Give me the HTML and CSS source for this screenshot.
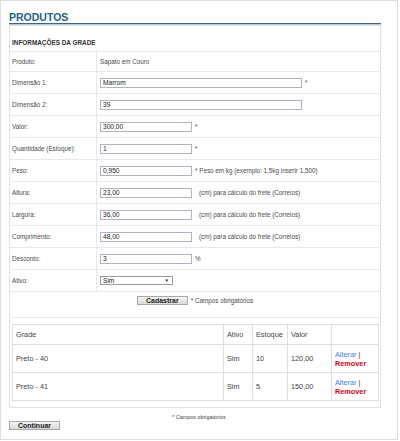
FILE: index.html
```html
<!DOCTYPE html>
<html lang="pt-BR">
<head>
<meta charset="utf-8">
<title>Produtos</title>
<link rel="stylesheet" href="styles.css">
</head>
<body>
<div class="page">
  <h1 class="title">PRODUTOS</h1>
  <div class="box">
    <div class="head">INFORMAÇÕES DA GRADE</div>
    <div class="row short-row"><div class="lbl">Produto:</div><div class="val">Sapato em Couro</div></div>
    <div class="row"><div class="lbl">Dimensão 1:</div><div class="val"><input class="inp long" value="Marrom"><span class="req">*</span></div></div>
    <div class="row"><div class="lbl">Dimensão 2:</div><div class="val"><input class="inp long" value="39"></div></div>
    <div class="row"><div class="lbl">Valor:</div><div class="val"><input class="inp" value="300,00"><span class="req">*</span></div></div>
    <div class="row"><div class="lbl">Quantidade (Estoque):</div><div class="val"><input class="inp" value="1"><span class="req">*</span></div></div>
    <div class="row"><div class="lbl">Peso:</div><div class="val"><input class="inp" value="0,950"><span class="req">* Peso em kg (exemplo: 1,5kg inserir 1,500)</span></div></div>
    <div class="row"><div class="lbl">Altura:</div><div class="val"><input class="inp" value="23,00"><span class="hint">(cm) para cálculo do frete (Correios)</span></div></div>
    <div class="row"><div class="lbl">Largura:</div><div class="val"><input class="inp" value="36,00"><span class="hint">(cm) para cálculo do frete (Correios)</span></div></div>
    <div class="row"><div class="lbl">Comprimento:</div><div class="val"><input class="inp" value="48,00"><span class="hint">(cm) para cálculo do frete (Correios)</span></div></div>
    <div class="row"><div class="lbl">Desconto:</div><div class="val"><input class="inp" value="3"><span class="req">%</span></div></div>
    <div class="row"><div class="lbl">Ativo:</div><div class="val"><div class="select"><span>Sim</span><span class="arrow">▼</span></div></div></div>
    <div class="submit-row"><button class="btn">Cadastrar</button><span class="req-note">* Campos obrigatórios</span></div>
    <div class="grid-wrap">
      <table class="grid">
        <colgroup><col class="c1"><col class="c2"><col class="c3"><col class="c4"><col class="c5"></colgroup>
        <tr class="gh"><td>Grade</td><td>Ativo</td><td>Estoque</td><td>Valor</td><td></td></tr>
        <tr class="gr"><td>Preto - 40</td><td>Sim</td><td>10</td><td>120,00</td><td><a class="alt">Alterar</a> | <br><a class="rem">Remover</a></td></tr>
        <tr class="gr"><td>Preto - 41</td><td>Sim</td><td>5</td><td>150,00</td><td><a class="alt">Alterar</a> | <br><a class="rem">Remover</a></td></tr>
      </table>
    </div>
  </div>
  <p class="note">* Campos obrigatórios</p>
  <button class="btn continue">Continuar</button>
</div>
</body>
</html>
```
FILE: styles.css
```css
* { box-sizing: border-box; }
html, body { margin: 0; background: #fff; }
body { font-family: "Liberation Sans", Arial, sans-serif; color: #4a4a4a; }

.page {
  width: 398px;
  height: 440px;
  border: 1px solid #dedede;
  padding: 0 8px 0 8px;
}

.title {
  margin: 10px 0 0;
  width: 372px;
  font-size: 10.5px;
  line-height: 12px;
  font-weight: bold;
  color: #246089;
  border-bottom: 1px solid #3e6583;
  box-shadow: 0 1px 0 #acc9dd;
}

.box {
  width: 372px;
  margin-top: 1px;
  border: 1px solid #e2e2e2;
}

.head {
  height: 26px;
  padding: 13px 0 0 2px;
  font-size: 6.4px;
  line-height: 7px;
  font-weight: bold;
  color: #333;
  border-bottom: 1px solid #e8e8e8;
}

.row {
  display: flex;
  height: 22px;
  border-bottom: 1px solid #e8e8e8;
  font-size: 6.3px;
}
.row.short-row { height: 20px; }

.lbl {
  width: 87px;
  padding-left: 2px;
  display: flex;
  align-items: center;
  border-right: 1px solid #e8e8e8;
}

.val {
  flex: 1;
  padding-left: 3px;
  display: flex;
  align-items: center;
}

.inp {
  width: 92px;
  height: 10px;
  margin: 0;
  padding: 0 2px;
  border: 1px solid #aeb0cc;
  font-family: "Liberation Sans", Arial, sans-serif;
  font-size: 6.6px;
  color: #222;
  background: #fff;
  outline: none;
}
.inp.long { width: 202px; }

.req { margin-left: 3px; }
.hint { margin-left: 7px; }

.select {
  width: 73px;
  height: 9px;
  border: 1px solid #9a9a9a;
  display: flex;
  align-items: center;
  justify-content: space-between;
  padding: 0 3px 0 2px;
  font-size: 6.6px;
  color: #222;
  background: #fff;
}
.select .arrow { font-size: 4.5px; color: #111; }

.submit-row {
  height: 26px;
  display: flex;
  justify-content: center;
  align-items: flex-start;
  padding-top: 4px;
  border-bottom: 1px solid #e8e8e8;
  font-size: 6.3px;
}
.req-note { margin-left: 3px; line-height: 9px; }

.btn {
  width: 51px;
  height: 9px;
  margin: 0;
  padding: 0;
  border: 1px solid #a8a8a8;
  background: linear-gradient(#f5f5f5, #dadada);
  font-family: "Liberation Sans", Arial, sans-serif;
  font-weight: bold;
  font-size: 7px;
  line-height: 7px;
  color: #222;
}

.grid-wrap { padding: 6px 2px 6px; }

.grid {
  width: 366px;
  table-layout: fixed;
  border-collapse: collapse;
  border: 1px solid #d9d9d9;
  font-size: 7.3px;
  color: #444;
}
.grid td {
  border: 1px solid #dedede;
  padding: 0 3px;
  vertical-align: middle;
}
.c1 { width: 211px; }
.c2 { width: 29px; }
.c3 { width: 35px; }
.c4 { width: 44px; }
.c5 { width: 47px; }
.gh td { height: 20px; }
.gr td { height: 28px; line-height: 9px; }

.alt { color: #3f7fd6; }
.rem { color: #d0021b; font-weight: bold; }

.note {
  margin: 6px 0 0;
  text-align: center;
  font-size: 5.4px;
  line-height: 6px;
  color: #444;
}

.continue { display: block; margin-top: 1px; }
```
